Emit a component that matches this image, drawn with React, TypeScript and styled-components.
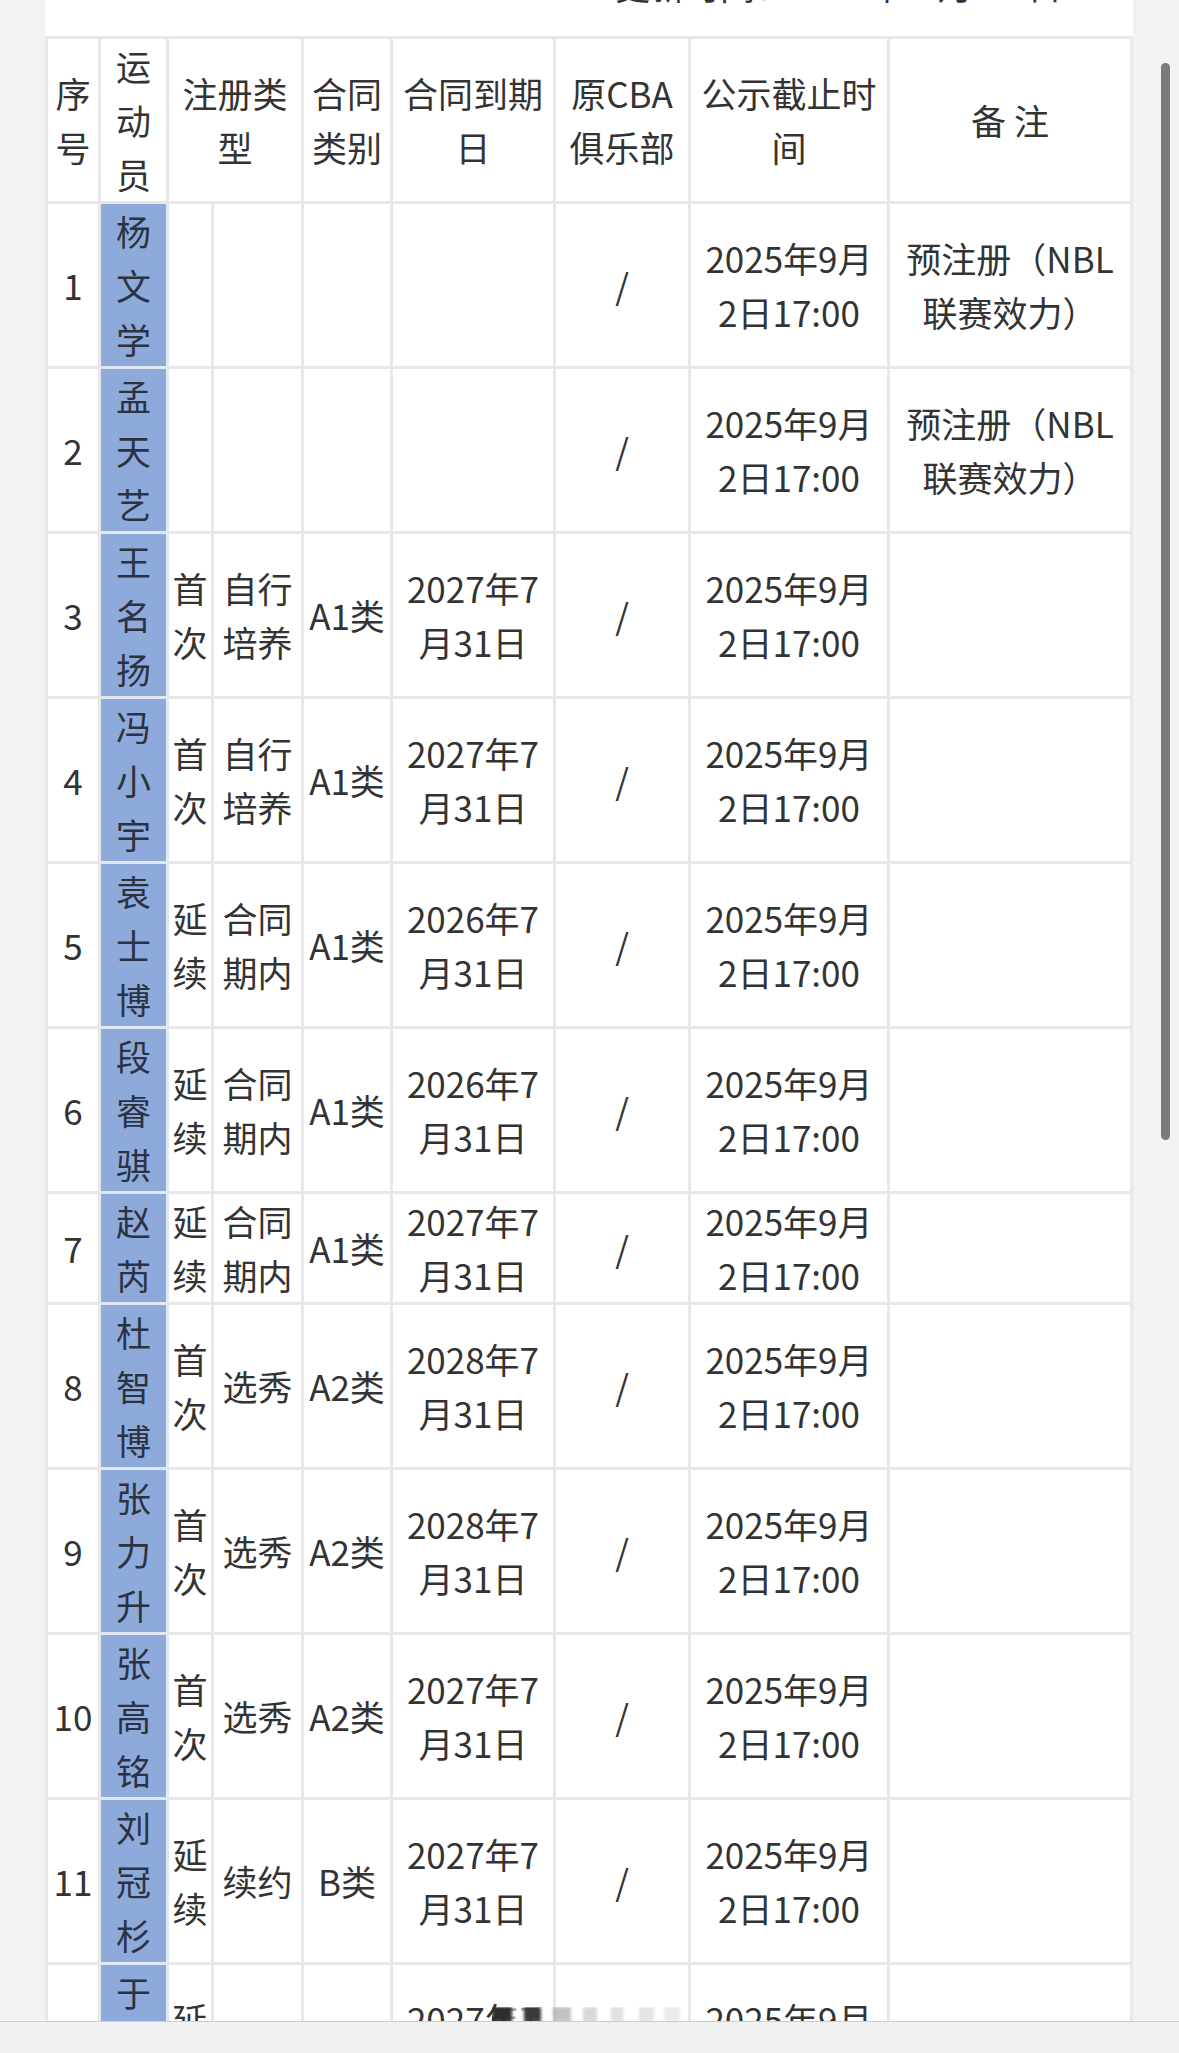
import React from "react"
import styled, { createGlobalStyle } from "styled-components"

type Row = {
  no: string
  name: string
  first: string[]
  kind: string[]
  cls: string
  due: string[]
  club: string
  until: string[]
  note: string[]
}

const UNTIL = ["2025年9月", "2日17:00"]
const NBL = ["预注册（NBL", "联赛效力）"]

const rows: Row[] = [
  { no: "1", name: "杨文学", first: [], kind: [], cls: "", due: [], club: "/", until: UNTIL, note: NBL },
  { no: "2", name: "孟天艺", first: [], kind: [], cls: "", due: [], club: "/", until: UNTIL, note: NBL },
  { no: "3", name: "王名扬", first: ["首", "次"], kind: ["自行", "培养"], cls: "A1类", due: ["2027年7", "月31日"], club: "/", until: UNTIL, note: [] },
  { no: "4", name: "冯小宇", first: ["首", "次"], kind: ["自行", "培养"], cls: "A1类", due: ["2027年7", "月31日"], club: "/", until: UNTIL, note: [] },
  { no: "5", name: "袁士博", first: ["延", "续"], kind: ["合同", "期内"], cls: "A1类", due: ["2026年7", "月31日"], club: "/", until: UNTIL, note: [] },
  { no: "6", name: "段睿骐", first: ["延", "续"], kind: ["合同", "期内"], cls: "A1类", due: ["2026年7", "月31日"], club: "/", until: UNTIL, note: [] },
  { no: "7", name: "赵芮", first: ["延", "续"], kind: ["合同", "期内"], cls: "A1类", due: ["2027年7", "月31日"], club: "/", until: UNTIL, note: [] },
  { no: "8", name: "杜智博", first: ["首", "次"], kind: ["选秀"], cls: "A2类", due: ["2028年7", "月31日"], club: "/", until: UNTIL, note: [] },
  { no: "9", name: "张力升", first: ["首", "次"], kind: ["选秀"], cls: "A2类", due: ["2028年7", "月31日"], club: "/", until: UNTIL, note: [] },
  { no: "10", name: "张高铭", first: ["首", "次"], kind: ["选秀"], cls: "A2类", due: ["2027年7", "月31日"], club: "/", until: UNTIL, note: [] },
  { no: "11", name: "刘冠杉", first: ["延", "续"], kind: ["续约"], cls: "B类", due: ["2027年7", "月31日"], club: "/", until: UNTIL, note: [] },
  { no: "12", name: "于嘉豪", first: ["延", "续"], kind: ["续约"], cls: "B类", due: ["2027年7", "月31日"], club: "/", until: UNTIL, note: [] },
]

const GlobalStyle = createGlobalStyle`
  html, body {
    margin: 0;
    background: #f2f2f2;
  }
  body {
    font-family: "Noto Sans CJK SC", "Noto Sans", sans-serif;
    color: #333;
    overflow: hidden;
  }
`

const Screen = styled.div`
  position: relative;
  height: 2053px;
  overflow: hidden;
`

const Card = styled.main`
  margin-left: 45px;
  width: 1088px;
  background: #fff;
`

const Stamp = styled.div`
  height: 36px;
  overflow: hidden;
  padding-left: 570px;
  font-size: 35px;
  line-height: 54px;
`

const StampText = styled.div`
  margin-top: -42px;
  white-space: nowrap;
`

const Sheet = styled.div`
  display: grid;
  grid-template-columns: 53px 68px 45px 90px 89px 163px 135px 199px 243px;
  border-top: 3px solid #e8e8e8;
  border-left: 3px solid #e8e8e8;
  font-size: 35px;
  line-height: 54px;
`

const Cell = styled.div<{ $span?: number; $name?: boolean }>`
  grid-column: span ${({ $span }) => $span || 1};
  box-sizing: border-box;
  display: flex;
  align-items: center;
  justify-content: center;
  text-align: center;
  white-space: nowrap;
  border-right: 3px solid ${({ $name }) => ($name ? "#e2e8f3" : "#e8e8e8")};
  border-bottom: 3px solid ${({ $name }) => ($name ? "#e2e8f3" : "#e8e8e8")};
  background: ${({ $name }) => ($name ? "#8eaadb" : "#fff")};
  color: ${({ $name }) => ($name ? "#2b3342" : "#333")};
`

const Line = styled.span`
  display: block;
`

const Scrollbar = styled.div`
  position: absolute;
  left: 1161px;
  top: 63px;
  width: 9px;
  height: 1077px;
  border-radius: 5px;
  background: #7b7b7b;
`

const BottomBar = styled.div`
  position: absolute;
  left: 0;
  right: 0;
  bottom: 0;
  height: 31px;
  background: #f1f1f1;
  border-top: 1px solid #cdcdcd;
`

const Smudge = styled.div`
  position: absolute;
  left: 492px;
  top: 2007px;
  width: 198px;
  height: 34px;
  filter: blur(1.5px);
  background: linear-gradient(
    to right,
    #2e2e2e 0 10%,
    rgba(255, 255, 255, 0.6) 10% 16%,
    #3a3a3a 16% 25%,
    transparent 25% 31%,
    rgba(120, 120, 120, 0.45) 31% 40%,
    transparent 40% 46%,
    rgba(140, 140, 140, 0.35) 46% 53%,
    transparent 53% 60%,
    rgba(150, 150, 150, 0.3) 60% 66%,
    transparent 66% 74%,
    rgba(160, 160, 160, 0.28) 74% 82%,
    transparent 82% 87%,
    rgba(170, 170, 170, 0.25) 87% 95%,
    transparent 95%
  );
  mask-image: linear-gradient(to bottom, #000 30%, rgba(0, 0, 0, 0.35));
`

const Lines = ({ items }: { items: string[] }) => (
  <div>
    {items.map((t, i) => (
      <Line key={i}>{t}</Line>
    ))}
  </div>
)

const App = () => {
  return (
    <Screen>
      <GlobalStyle />
      <Card>
        <Stamp>
          <StampText>更新时间：2025年 8 月 29 日</StampText>
        </Stamp>
        <Sheet>
          <Cell><Lines items={["序", "号"]} /></Cell>
          <Cell><Lines items={["运", "动", "员"]} /></Cell>
          <Cell $span={2}><Lines items={["注册类", "型"]} /></Cell>
          <Cell><Lines items={["合同", "类别"]} /></Cell>
          <Cell><Lines items={["合同到期", "日"]} /></Cell>
          <Cell><Lines items={["原CBA", "俱乐部"]} /></Cell>
          <Cell><Lines items={["公示截止时", "间"]} /></Cell>
          <Cell>备 注</Cell>

          {rows.map((r) => (
            <React.Fragment key={r.no}>
              <Cell>{r.no}</Cell>
              <Cell $name><Lines items={r.name.split("")} /></Cell>
              <Cell><Lines items={r.first} /></Cell>
              <Cell><Lines items={r.kind} /></Cell>
              <Cell>{r.cls}</Cell>
              <Cell><Lines items={r.due} /></Cell>
              <Cell>{r.club}</Cell>
              <Cell><Lines items={r.until} /></Cell>
              <Cell><Lines items={r.note} /></Cell>
            </React.Fragment>
          ))}
        </Sheet>
      </Card>
      <Scrollbar />
      <Smudge />
      <BottomBar />
    </Screen>
  )
}

export default App
